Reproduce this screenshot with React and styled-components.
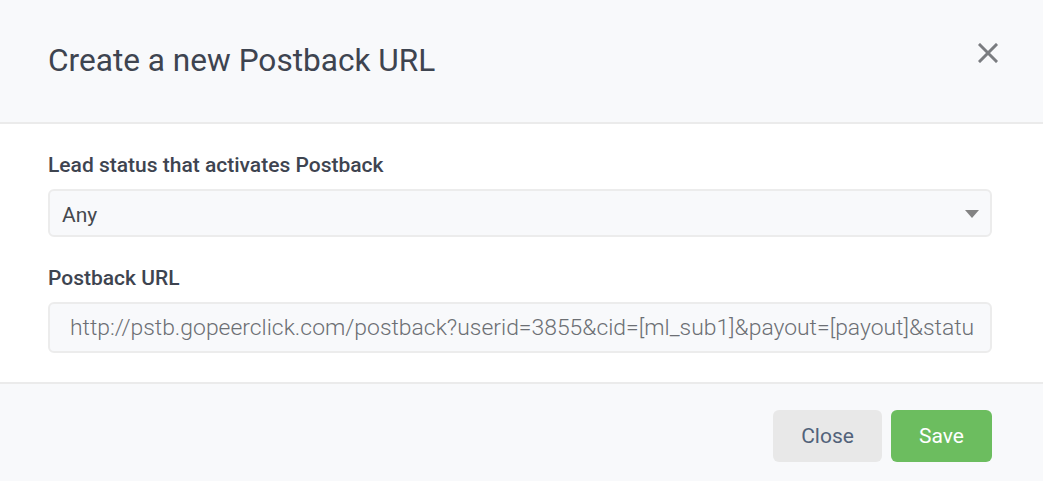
import { createGlobalStyle, styled } from "styled-components";

const GlobalStyle = createGlobalStyle`
  html, body {
    margin: 0;
    padding: 0;
    background: #ffffff;
    font-family: Roboto, "Liberation Sans", sans-serif;
  }
  * {
    box-sizing: border-box;
  }
`;

const Modal = styled.div`
  width: 1043px;
  height: 481px;
  display: flex;
  flex-direction: column;
  background: #ffffff;
  overflow: hidden;
`;

const Header = styled.header`
  height: 124px;
  flex: none;
  display: flex;
  align-items: flex-start;
  justify-content: space-between;
  padding: 40px 45px 0 48px;
  background: #f8f9fb;
  border-bottom: 2px solid #ebebeb;
`;

const Title = styled.h2`
  margin: 0;
  font-size: 31.6px;
  line-height: 41px;
  font-weight: 400;
  color: #3e4450;
`;

const CloseIcon = styled.button`
  width: 20px;
  height: 20px;
  margin-top: 3px;
  padding: 0;
  border: none;
  background: none;
  display: flex;
  color: #7a7c80;
  cursor: pointer;
`;

const Body = styled.div`
  flex: none;
  height: 258px;
  padding: 29px 51px 0 48px;
  display: flex;
  flex-direction: column;
`;

const Field = styled.div`
  display: flex;
  flex-direction: column;
  gap: 12px;
  margin-bottom: ${(p) => p.$space || 0}px;
`;

const Label = styled.label`
  font-size: 21px;
  font-weight: 500;
  color: #3e4450;
  line-height: 24px;
`;

const SelectBox = styled.div`
  height: 48px;
  display: flex;
  align-items: center;
  justify-content: space-between;
  padding: 3px 11px 0 12px;
  background: #f8f9fb;
  border: 2px solid #ececec;
  border-radius: 6px;
  font-size: 21px;
  color: #45484e;
`;

const Arrow = styled.span`
  width: 0;
  height: 0;
  border-left: 7px solid transparent;
  border-right: 7px solid transparent;
  border-top: 8px solid #838383;
  margin-top: -2px;
`;

const TextInput = styled.input`
  height: 51px;
  width: 100%;
  padding: 0 16px 0 20px;
  background: #f8f9fb;
  border: 2px solid #ececec;
  border-radius: 6px;
  font-family: Roboto, "Liberation Sans", sans-serif;
  font-size: 22.9px;
  font-weight: 300;
  color: #6c6f74;
  outline: none;
`;

const Footer = styled.footer`
  flex: 1;
  display: flex;
  align-items: center;
  justify-content: flex-end;
  gap: 9px;
  padding: 6px 51px 0 48px;
  background: #f8f9fb;
  border-top: 2px solid #ebebeb;
`;

const Button = styled.button`
  height: 52px;
  width: ${(p) => p.$w}px;
  padding: 0;
  border: none;
  border-radius: 6px;
  font-family: Roboto, "Liberation Sans", sans-serif;
  font-size: 21px;
  font-weight: 400;
  background: ${(p) => (p.$primary ? "#6cbd5f" : "#e8e8e8")};
  color: ${(p) => (p.$primary ? "#ffffff" : "#52627a")};
  cursor: pointer;
`;

const App = () => {
  return (
    <>
      <GlobalStyle />
      <Modal>
        <Header>
          <Title>Create a new Postback URL</Title>
          <CloseIcon aria-label="Close">
            <svg width="20" height="20" viewBox="0 0 20 20">
              <path
                d="M2 2 L18 18 M18 2 L2 18"
                stroke="currentColor"
                strokeWidth="3"
                strokeLinecap="square"
              />
            </svg>
          </CloseIcon>
        </Header>
        <Body>
          <Field $space={29}>
            <Label>Lead status that activates Postback</Label>
            <SelectBox>
              <span>Any</span>
              <Arrow />
            </SelectBox>
          </Field>
          <Field>
            <Label>Postback URL</Label>
            <TextInput
              readOnly
              value="http://pstb.gopeerclick.com/postback?userid=3855&cid=[ml_sub1]&payout=[payout]&status=[status]"
            />
          </Field>
        </Body>
        <Footer>
          <Button $w={109}>Close</Button>
          <Button $w={101} $primary>
            Save
          </Button>
        </Footer>
      </Modal>
    </>
  );
};

export default App;
